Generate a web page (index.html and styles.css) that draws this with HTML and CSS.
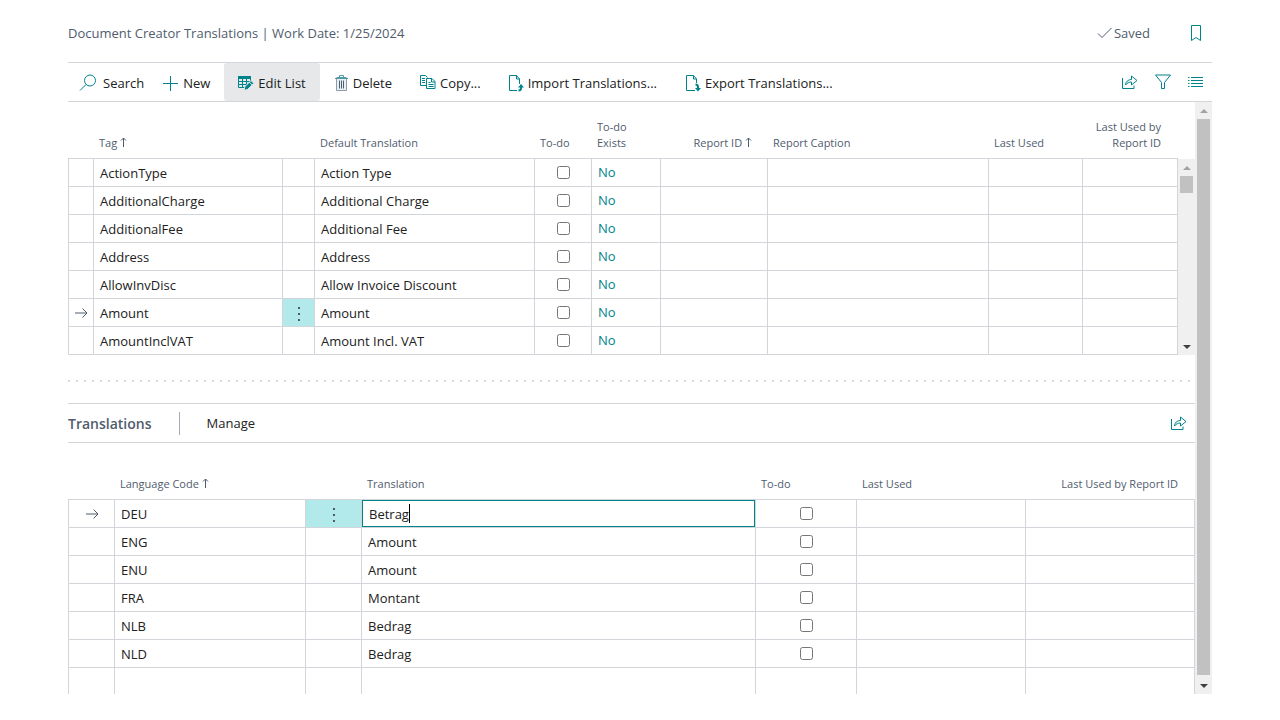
FILE: index.html
```html
<!DOCTYPE html>
<html lang="en">
<head>
    <meta charset="UTF-8">
    <meta name="viewport" content="width=device-width, initial-scale=1.0">
    <title>Document Creator Translations</title>
    <link rel="stylesheet" href="styles.css">
</head>
<body>
    <!-- shared icons -->
    <svg class="icon-defs" aria-hidden="true">
        <symbol id="icon-share" viewBox="0 0 16 16">
            <path d="M.5 4v10.500h11.500v-3M3.500 11c.3-3.500 2.600-5.500 6-5.500v-3.500l5.500 4.500-5.500 4.500V8c-2.600 0-4.400 1-6 3z"/>
        </symbol>
        <symbol id="icon-row" viewBox="0 0 14 12">
            <path d="M1 6h12M8.500 1.500 13 6l-4.500 4.500"/>
        </symbol>
        <symbol id="icon-sort" viewBox="0 0 8 12">
            <path d="M4.500 11V2M2 4.500 4.500 2 7 4.500"/>
        </symbol>
        <symbol id="icon-dots" viewBox="0 0 4 16">
            <path d="M1 1h2v2H1zM1 7h2v2H1zM1 13h2v2H1z"/>
        </symbol>
    </svg>

    <header class="title-bar">
        <h1>Document Creator Translations | Work Date: 1/25/2024</h1>
        <span class="saved">
            <svg width="16" height="12" viewBox="0 0 16 12"><path d="M1 6.500 5 10.500 14.500 1"/></svg>
            Saved
        </span>
        <button class="icon-button" aria-label="Bookmark">
            <svg width="12" height="16" viewBox="0 0 12 16"><path d="M1.500.5h9v15L6 12.500 1.500 15.500z"/></svg>
        </button>
    </header>

    <nav class="toolbar">
        <button class="search">
            <svg width="18" height="18" viewBox="0 0 18 18"><circle cx="11" cy="6.500" r="5.500"/><path d="M7 10.500 1 16.500"/></svg>
            Search
        </button>
        <button class="new">
            <svg width="16" height="16" viewBox="0 0 16 16"><path d="M7.500 1v15M0 8.500h15"/></svg>
            New
        </button>
        <button class="active">
            <svg width="16" height="16" viewBox="0 0 16 16">
                <path class="fill" d="M0 1h13v3H0z"/>
                <path d="M.5 2v10.500h8M0 6.500h13M0 9.500h10M4.500 3v10M8.500 3v10M12.500 3v4"/>
                <path class="pencil" d="m6 15.500 1-4 6-6 2.800 2.800-6 6z"/>
                <path class="halo" d="m11.200 7 2.800 2.800"/>
            </svg>
            Edit List
        </button>
        <button class="delete">
            <svg width="13" height="16" viewBox="0 0 13 16">
                <path class="bin" d="M1.500 3.500v12h10v-12"/>
                <path class="slats" d="M4.500 5.500v8M6.500 5.500v8M8.500 5.500v8"/>
                <path d="M0 3.500h13M1.500 2.500h10M4.500 2V.5h4V2"/>
            </svg>
            Delete
        </button>
        <button class="copy">
            <svg width="16" height="16" viewBox="0 0 16 16">
                <path d="M6 10.500H.5V.5h5l2 2M2 3.500h3M2 5.500h3M2 7.500h3M6.500 3.500h5.500l3 3v7H6.500zM11.500 3.500v3.500h3.500M8.500 7.500h2M8.500 9.500h5M8.500 11.500h5"/>
            </svg>
            Copy...
        </button>
        <button class="file">
            <svg width="15" height="17" viewBox="0 0 15 17">
                <path d="M8 15.500H.5V.5h7l3 3.500V9M7.500.5V4h3"/>
                <path class="stem" d="M9.500 15.500c1.700 0 2.500-.8 2.500-2.500v-1"/>
                <path class="fill" d="m12 9 3 3.500H9z"/>
            </svg>
            Import Translations...
        </button>
        <button class="file">
            <svg width="15" height="17" viewBox="0 0 15 17">
                <path d="M9 15.500H.5V.5h7l3 3.500v4M7.500.5V4h3"/>
                <path class="stem" d="M9.500 9.500c1.700 0 2.500.8 2.500 2.500v1.500"/>
                <path class="fill" d="m12 16.500-3-3.500h6z"/>
            </svg>
            Export Translations...
        </button>
        <div class="toolbar-end">
            <button class="icon-button" aria-label="Share"><svg width="16" height="16"><use href="#icon-share"/></svg></button>
            <button class="icon-button" aria-label="Filter">
                <svg width="16" height="16" viewBox="0 0 16 16"><path d="M.5 1h15L9.500 8.500v6h-3v-6z"/></svg>
            </button>
            <button class="icon-button" aria-label="List view">
                <svg width="15" height="12" viewBox="0 0 15 12"><path d="M3 1.500h12M3 4.500h12M3 7.500h12M3 10.500h12M0 1.500h1.500M0 4.500h1.500M0 7.500h1.500M0 10.500h1.500"/></svg>
            </button>
        </div>
    </nav>

    <div class="scroll-area">
        <main>
            <section class="tags">
                <table>
                    <colgroup>
                        <col class="t-mark"><col class="t-tag"><col class="t-menu"><col class="t-default"><col class="t-todo">
                        <col class="t-exists"><col class="t-report"><col class="t-caption"><col class="t-used"><col class="t-used-by">
                    </colgroup>
                    <thead>
                        <tr>
                            <th></th>
                            <th>Tag <svg class="sort" width="8" height="12"><use href="#icon-sort"/></svg></th>
                            <th></th>
                            <th>Default Translation</th>
                            <th>To-do</th>
                            <th>To-do Exists</th>
                            <th class="right sorted">Report ID <svg class="sort" width="8" height="12"><use href="#icon-sort"/></svg></th>
                            <th>Report Caption</th>
                            <th>Last Used</th>
                            <th class="right">Last Used by Report ID</th>
                        </tr>
                    </thead>
                    <tbody>
                        <tr><td></td><td>ActionType</td><td></td><td>Action Type</td><td class="check"><input type="checkbox" aria-label="To-do ActionType"></td><td><a href="#">No</a></td><td></td><td></td><td></td><td></td></tr>
                        <tr><td></td><td>AdditionalCharge</td><td></td><td>Additional Charge</td><td class="check"><input type="checkbox" aria-label="To-do AdditionalCharge"></td><td><a href="#">No</a></td><td></td><td></td><td></td><td></td></tr>
                        <tr><td></td><td>AdditionalFee</td><td></td><td>Additional Fee</td><td class="check"><input type="checkbox" aria-label="To-do AdditionalFee"></td><td><a href="#">No</a></td><td></td><td></td><td></td><td></td></tr>
                        <tr><td></td><td>Address</td><td></td><td>Address</td><td class="check"><input type="checkbox" aria-label="To-do Address"></td><td><a href="#">No</a></td><td></td><td></td><td></td><td></td></tr>
                        <tr><td></td><td>AllowInvDisc</td><td></td><td>Allow Invoice Discount</td><td class="check"><input type="checkbox" aria-label="To-do AllowInvDisc"></td><td><a href="#">No</a></td><td></td><td></td><td></td><td></td></tr>
                        <tr>
                            <td class="mark"><svg width="14" height="12"><use href="#icon-row"/></svg></td>
                            <td>Amount</td>
                            <td class="menu"><button aria-label="More options"><svg width="4" height="16"><use href="#icon-dots"/></svg></button></td>
                            <td>Amount</td>
                            <td class="check"><input type="checkbox" aria-label="To-do Amount"></td>
                            <td><a href="#">No</a></td>
                            <td></td><td></td><td></td><td></td>
                        </tr>
                        <tr><td></td><td>AmountInclVAT</td><td></td><td>Amount Incl. VAT</td><td class="check"><input type="checkbox" aria-label="To-do AmountInclVAT"></td><td><a href="#">No</a></td><td></td><td></td><td></td><td></td></tr>
                    </tbody>
                </table>
                <div class="scrollbar"><i class="up"></i><span class="thumb"></span><i class="down"></i></div>
            </section>

            <div class="splitter"></div>

            <section>
                <div class="part-bar">
                    <h2>Translations</h2>
                    <button>Manage</button>
                    <button class="icon-button" aria-label="Share"><svg width="16" height="16"><use href="#icon-share"/></svg></button>
                </div>
                <table class="languages">
                    <colgroup>
                        <col class="l-mark"><col class="l-code"><col class="l-menu"><col class="l-text"><col class="l-todo"><col class="l-used"><col class="l-used">
                    </colgroup>
                    <thead>
                        <tr>
                            <th></th>
                            <th>Language Code <svg class="sort" width="8" height="12"><use href="#icon-sort"/></svg></th>
                            <th></th>
                            <th>Translation</th>
                            <th>To-do</th>
                            <th>Last Used</th>
                            <th class="right">Last Used by Report ID</th>
                        </tr>
                    </thead>
                    <tbody>
                        <tr>
                            <td class="mark"><svg width="14" height="12"><use href="#icon-row"/></svg></td>
                            <td>DEU</td>
                            <td class="menu"><button aria-label="More options"><svg width="4" height="16"><use href="#icon-dots"/></svg></button></td>
                            <td class="edit"><input type="text" value="Betrag" aria-label="Translation"><span class="caret"></span></td>
                            <td class="check"><input type="checkbox" aria-label="To-do DEU"></td>
                            <td></td><td></td>
                        </tr>
                        <tr><td></td><td>ENG</td><td></td><td>Amount</td><td class="check"><input type="checkbox" aria-label="To-do ENG"></td><td></td><td></td></tr>
                        <tr><td></td><td>ENU</td><td></td><td>Amount</td><td class="check"><input type="checkbox" aria-label="To-do ENU"></td><td></td><td></td></tr>
                        <tr><td></td><td>FRA</td><td></td><td>Montant</td><td class="check"><input type="checkbox" aria-label="To-do FRA"></td><td></td><td></td></tr>
                        <tr><td></td><td>NLB</td><td></td><td>Bedrag</td><td class="check"><input type="checkbox" aria-label="To-do NLB"></td><td></td><td></td></tr>
                        <tr><td></td><td>NLD</td><td></td><td>Bedrag</td><td class="check"><input type="checkbox" aria-label="To-do NLD"></td><td></td><td></td></tr>
                        <tr><td></td><td></td><td></td><td></td><td></td><td></td><td></td></tr>
                    </tbody>
                </table>
            </section>
        </main>
        <div class="scrollbar"><i class="up"></i><span class="thumb"></span><i class="down"></i></div>
    </div>
</body>
</html>
```
FILE: styles.css
```css
* {
    box-sizing: border-box;
}
body {
    margin: 0;
    height: 100vh;
    padding: 0 68px 26px;
    display: flex;
    flex-direction: column;
    background-color: #fff;
    color: #212121;
    font-family: "Open Sans", "Noto Sans", sans-serif;
    font-size: 13px;
    line-height: 20px;
}
button {
    padding: 0;
    border: none;
    background: none;
    color: inherit;
    font: inherit;
    cursor: pointer;
}
svg {
    display: block;
    flex: none;
    fill: none;
    stroke: #00838a;
}
.icon-defs {
    position: absolute;
    width: 0;
    height: 0;
}

/* title */
.title-bar {
    display: flex;
    align-items: center;
    height: 62px;
    padding: 4px 10px 0 0;
    color: #505c6d;
}
h1 {
    flex: 1;
    margin: 0;
    font-size: 13px;
    font-weight: 400;
}
.saved {
    display: flex;
    align-items: center;
    gap: 1px;
    margin-right: 40px;
}
.saved svg {
    stroke: #505c6d;
}

/* toolbar */
.toolbar {
    display: flex;
    height: 40px;
    padding-right: 9px;
    border-top: 1px solid #d2d5d9;
    border-bottom: 1px solid #d2d5d9;
}
.toolbar button {
    display: flex;
    align-items: center;
    gap: 4px;
    padding: 2px 14px 0;
    white-space: nowrap;
}
.toolbar .search {
    gap: 6px;
    padding: 2px 6px 0 11px;
}
.toolbar .new {
    padding-left: 13px;
}
.toolbar .active {
    background-color: #e6e8ea;
    border-radius: 3px;
}
.toolbar .delete {
    gap: 5px;
    padding-left: 15px;
}
.toolbar .file {
    padding-right: 15px;
}
.fill {
    fill: #00838a;
    stroke: none;
}
.pencil {
    fill: #00838a;
    stroke: #e6e8ea;
}
.halo {
    stroke: #e6e8ea;
}
.bin {
    fill: #e5f1f3;
    stroke: #8f9aa5;
}
.slats {
    stroke: #505c6d;
}
.delete svg {
    stroke: #4f9aa5;
}
.stem {
    stroke-width: 2;
}
.toolbar-end {
    display: flex;
    gap: 17px;
    margin-left: auto;
}
.toolbar .toolbar-end button {
    padding: 0;
}

/* scrolling part */
.scroll-area {
    flex: 1;
    display: flex;
    min-height: 0;
    overflow: hidden;
}
main {
    flex: 1;
    min-width: 0;
}
.scrollbar {
    flex: none;
    display: flex;
    flex-direction: column;
    justify-content: space-between;
    align-items: center;
    width: 17px;
    background-color: #f0f0f0;
}
.scrollbar i {
    display: flex;
    justify-content: center;
    align-items: center;
    width: 17px;
    height: 17px;
}
.scrollbar i::before {
    content: "";
    border: 4px solid transparent;
}
.scrollbar .up::before {
    border-top: none;
    border-bottom-color: #a3a3a3;
}
.scrollbar .down::before {
    border-bottom: none;
    border-top-color: #404040;
}
.thumb {
    flex: 1;
    width: 13px;
    margin-bottom: 2px;
    background-color: #c1c1c1;
}
.tags {
    display: flex;
}
.tags .scrollbar {
    margin-top: 57px;
}
.tags .thumb {
    flex: none;
    height: 17px;
    margin-bottom: auto;
}

/* tables */
table {
    flex: 1;
    width: 100%;
    min-width: 0;
    table-layout: fixed;
    border-spacing: 0;
}
th {
    height: 57px;
    padding: 0 5px 7px;
    border-bottom: 1px solid #d2d5d9;
    color: #505c6d;
    font-size: 11px;
    font-weight: 400;
    line-height: 16px;
    text-align: left;
    vertical-align: bottom;
}
td {
    height: 28px;
    padding: 0 6px;
    border-right: 1px solid #d2d5d9;
    border-bottom: 1px solid #d2d5d9;
    line-height: 20px;
    white-space: nowrap;
}
td:first-child {
    border-left: 1px solid #d2d5d9;
}
.right {
    padding-right: 17px;
    text-align: right;
}
.sorted {
    padding-right: 16px;
    white-space: nowrap;
}
.sort {
    display: inline-block;
    vertical-align: -1px;
    margin-left: -1px;
    stroke: #505c6d;
}
td a {
    display: block;
    margin-top: -2px;
    color: #00838a;
    text-decoration: none;
}
.mark {
    padding: 0;
}
.mark svg {
    margin: 0 auto;
    stroke: #505c6d;
}
.menu {
    padding: 0;
    background-color: #b2e9eb;
}
.menu button {
    display: block;
    width: 100%;
    height: 27px;
    padding-top: 2px;
}
.menu svg {
    margin: 0 auto;
    fill: #505c6d;
    stroke: none;
}
.check {
    padding: 0;
    text-align: center;
}
.check input {
    display: block;
    width: 13px;
    height: 13px;
    margin: 0 auto;
}
.edit {
    position: relative;
    padding: 0;
}
.edit input {
    display: block;
    width: 100%;
    height: 27px;
    padding: 0 6px;
    border: 1px solid #00838a;
    outline: none;
    color: inherit;
    font: inherit;
}
.caret {
    position: absolute;
    top: 4px;
    left: 47px;
    width: 1px;
    height: 19px;
    background-color: #000;
}
.t-mark { width: 26px; }
.t-tag { width: 189px; }
.t-menu { width: 32px; }
.t-default { width: 220px; }
.t-todo { width: 57px; }
.t-exists { width: 69px; }
.t-report { width: 107px; }
.t-caption { width: 221px; }
.t-used { width: 94px; }
.t-used-by { width: 95px; }
.l-mark { width: 47px; }
.l-code { width: 191px; }
.l-menu { width: 56px; }
.l-text { width: 394px; }
.l-todo { width: 101px; }
.l-used { width: 169px; }

/* split between the two parts */
.splitter {
    height: 2px;
    margin: 25px 0 21px;
    background: repeating-linear-gradient(to right, #d8dadd 0 2px, transparent 2px 8px);
}
.part-bar {
    display: flex;
    align-items: center;
    height: 40px;
    padding-right: 8px;
    border-top: 1px solid #d2d5d9;
    border-bottom: 1px solid #d2d5d9;
}
h2 {
    margin: 0 27px 0 0;
    padding-right: 27px;
    border-right: 1px solid #a6abb3;
    color: #505c6d;
    font-size: 14px;
    font-weight: 600;
    line-height: 23px;
}
.part-bar .icon-button {
    margin-left: auto;
}
```
